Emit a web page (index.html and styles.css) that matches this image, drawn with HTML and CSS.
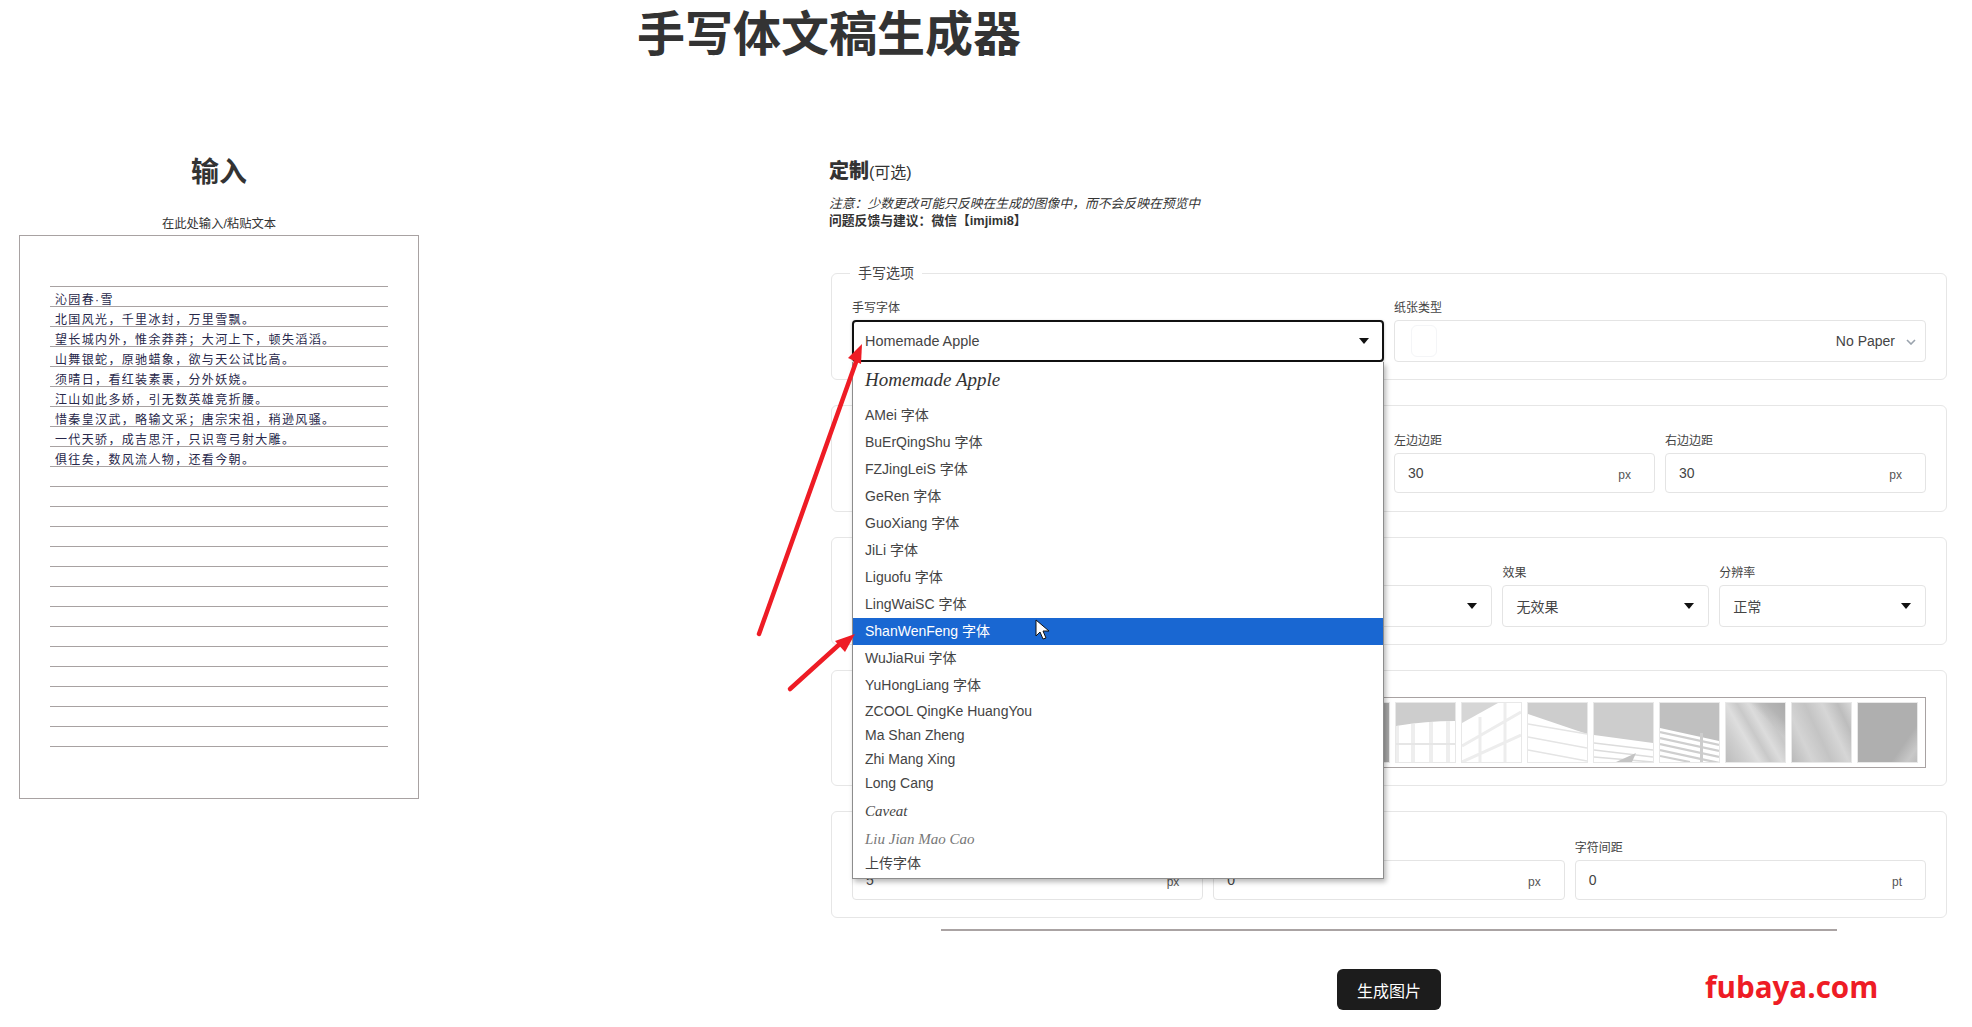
FILE: index.html
```html
<!DOCTYPE html>
<html lang="zh-CN">
<head>
<meta charset="utf-8">
<title>手写体文稿生成器</title>
<link rel="stylesheet" href="styles.css">
</head>
<body>
<h1 class="title">手写体文稿生成器</h1>
<main class="columns">
  <section class="input-col">
    <h2 class="input-title">输入</h2>
    <p class="input-hint">在此处输入/粘贴文本</p>
    <div class="paper">
      <div class="line">沁园春·雪</div>
      <div class="line">北国风光，千里冰封，万里雪飘。</div>
      <div class="line">望长城内外，惟余莽莽；大河上下，顿失滔滔。</div>
      <div class="line">山舞银蛇，原驰蜡象，欲与天公试比高。</div>
      <div class="line">须晴日，看红装素裹，分外妖娆。</div>
      <div class="line">江山如此多娇，引无数英雄竞折腰。</div>
      <div class="line">惜秦皇汉武，略输文采；唐宗宋祖，稍逊风骚。</div>
      <div class="line">一代天骄，成吉思汗，只识弯弓射大雕。</div>
      <div class="line">俱往矣，数风流人物，还看今朝。</div>
      <div class="line"></div><div class="line"></div><div class="line"></div><div class="line"></div><div class="line"></div><div class="line"></div><div class="line"></div><div class="line"></div><div class="line"></div><div class="line"></div><div class="line"></div><div class="line"></div><div class="line"></div><div class="line"></div>
    </div>
  </section>

  <section class="custom-col">
    <h3 class="custom-title"><b>定制</b><span class="optional">(可选)</span></h3>
    <p class="note"><i>注意：少数更改可能只反映在生成的图像中，而不会反映在预览中</i><br><b>问题反馈与建议：微信【imjimi8】</b></p>

    <div class="group group-first">
      <span class="legend">手写选项</span>
      <div class="grid-2">
        <div class="field">
          <label class="label">手写字体</label>
          <div class="control control-focus">
            <span class="value value-lg">Homemade Apple</span><span class="caret"></span>
            <ul class="menu">
              <li class="opt opt-hand">Homemade Apple</li>
              <li class="opt">AMei 字体</li>
              <li class="opt">BuErQingShu 字体</li>
              <li class="opt">FZJingLeiS 字体</li>
              <li class="opt">GeRen 字体</li>
              <li class="opt">GuoXiang 字体</li>
              <li class="opt">JiLi 字体</li>
              <li class="opt">Liguofu 字体</li>
              <li class="opt">LingWaiSC 字体</li>
              <li class="opt opt-active">ShanWenFeng 字体</li>
              <li class="opt">WuJiaRui 字体</li>
              <li class="opt">YuHongLiang 字体</li>
              <li class="opt opt-sm">ZCOOL QingKe HuangYou</li>
              <li class="opt opt-sm">Ma Shan Zheng</li>
              <li class="opt opt-sm">Zhi Mang Xing</li>
              <li class="opt opt-sm">Long Cang</li>
              <li class="opt opt-caveat">Caveat</li>
              <li class="opt opt-sm opt-liu">Liu Jian Mao Cao</li>
              <li class="opt opt-sm">上传字体</li>
            </ul>
          </div>
        </div>
        <div class="field">
          <label class="label">纸张类型</label>
          <div class="control control-paper">
            <span class="swatch"></span>
            <span class="paper-value">No Paper</span>
            <svg class="chevron" viewBox="0 0 10 6" width="10" height="6"><path d="M1 1l4 4 4-4" fill="none" stroke="#9aa3ad" stroke-width="1.6"/></svg>
          </div>
        </div>
      </div>
    </div>

    <div class="group group-margins">
      <div class="grid-4">
        <div class="field"></div>
        <div class="field"></div>
        <div class="field">
          <label class="label">左边边距</label>
          <div class="control control-num"><span class="value">30</span><span class="unit">px</span></div>
        </div>
        <div class="field">
          <label class="label">右边边距</label>
          <div class="control control-num"><span class="value">30</span><span class="unit">px</span></div>
        </div>
      </div>
    </div>

    <div class="group">
      <div class="grid-5">
        <div class="field"></div>
        <div class="field"></div>
        <div class="field">
          <span class="label"></span>
          <div class="control"><span class="caret"></span></div>
        </div>
        <div class="field">
          <label class="label">效果</label>
          <div class="control"><span class="value">无效果</span><span class="caret"></span></div>
        </div>
        <div class="field">
          <label class="label">分辨率</label>
          <div class="control"><span class="value">正常</span><span class="caret"></span></div>
        </div>
      </div>
    </div>

    <div class="group">
      <div class="thumbs">
        <span class="thumb thumb-dark"></span>
        <span class="thumb">
          <svg viewBox="0 0 59 59"><path d="M0 0h59v18Q30 18 0 23z" fill="#cdcdcd"/><path d="M1 23v36M17 21v38M35 19v40M52 18v41" stroke="#eee" stroke-width="4" fill="none"/><path d="M0 41h59" stroke="#e6e6e6" stroke-width="2" fill="none"/></svg>
        </span>
        <span class="thumb">
          <svg viewBox="0 0 59 59"><path d="M0 0h36L0 20z" fill="#d6d6d6"/><path d="M0 43L59 9M0 59L59 32M18 14v45M43 0v59" stroke="#ededed" stroke-width="3" fill="none"/></svg>
        </span>
        <span class="thumb">
          <svg viewBox="0 0 59 59"><path d="M0 0h59v31L0 11z" fill="#cdcdcd"/><path d="M0 21L59 31M0 34L59 45M0 47L59 58" stroke="#e4e4e4" stroke-width="1.6" fill="none"/></svg>
        </span>
        <span class="thumb">
          <svg viewBox="0 0 59 59"><path d="M0 0h59v40L0 32z" fill="#cdcdcd"/><path d="M0 40L59 47M0 47L59 54M0 54L59 59" stroke="#dcdcdc" stroke-width="1.6" fill="none"/><path d="M22 59L42 50 38 59z" fill="#c4c4c4"/></svg>
        </span>
        <span class="thumb">
          <svg viewBox="0 0 59 59"><path d="M0 0h59v38L0 25z" fill="#c0c0c0"/><path d="M0 29L59 42M0 35L59 48M0 41L59 54M0 47L59 60M0 53L30 59" stroke="#cfcfcf" stroke-width="2.2" fill="none"/><path d="M40 30h3v29h-3z" fill="#cdcdcd"/></svg>
        </span>
        <span class="thumb thumb-rays-a"></span>
        <span class="thumb thumb-rays-b"></span>
        <span class="thumb thumb-corner"></span>
      </div>
    </div>

    <div class="group group-spacing">
      <div class="grid-3">
        <div class="field">
          <span class="label"></span>
          <div class="control control-num"><span class="value">5</span><span class="unit">px</span></div>
        </div>
        <div class="field">
          <span class="label"></span>
          <div class="control control-num"><span class="value">0</span><span class="unit">px</span></div>
        </div>
        <div class="field">
          <label class="label">字符间距</label>
          <div class="control control-num"><span class="value">0</span><span class="unit">pt</span></div>
        </div>
      </div>
    </div>

    <hr class="rule">
    <div class="actions"><button class="generate" type="button">生成图片</button></div>
  </section>
</main>

<div class="watermark">fubaya.com</div>

<svg class="overlay" viewBox="0 0 1972 1027" width="1972" height="1027">
  <g fill="none" stroke="#ee1c25" stroke-width="4.5" stroke-linecap="round">
    <path d="M759 634L856 362"/>
    <path d="M790 689L842 642"/>
  </g>
  <path d="M862 344L848 358 861 364z" fill="#ee1c25"/>
  <path d="M855 634L835 641 845 652z" fill="#ee1c25"/>
  <path d="M1036 620v16l4-4 3 7 3-1-3-7h6z" fill="#fff" stroke="#111" stroke-width="1"/>
</svg>
</body>
</html>
```
FILE: styles.css
```css
* { box-sizing: border-box; }
html, body { margin: 0; padding: 0; background: #fff; }
body {
  position: relative;
  width: 1972px;
  height: 1027px;
  overflow: hidden;
  color: #333;
  font-family: "Liberation Sans", "Noto Sans CJK SC", sans-serif;
}
.title {
  width: 1658px;
  height: 66px;
  margin: 0;
  text-align: center;
  font-size: 48px;
  line-height: 70px;
  font-weight: 700;
  color: #333;
}
.columns {
  display: grid;
  grid-template-columns: 400px 1118px;
  column-gap: 410px;
  padding: 84px 0 0 19px;
}
.input-title {
  margin: 0;
  height: 44px;
  text-align: center;
  font-size: 28px;
  line-height: 46px;
  font-weight: 700;
}
.input-hint {
  margin: 20px 0 4px;
  height: 17px;
  text-align: center;
  font-size: 12.3px;
  line-height: 20px;
}
.paper {
  height: 564px;
  border: 1px solid #a8a2a2;
  padding: 50px 30px 0;
}
.line {
  height: 20px;
  padding-left: 5px;
  border-bottom: 1px solid #a8a2a2;
  font-size: 12px;
  line-height: 27px;
  letter-spacing: 1.35px;
  color: #27274a;
}
.line:first-child { height: 21px; border-top: 1px solid #a8a2a2; }

.custom-title {
  display: flex;
  align-items: baseline;
  margin: 0;
  height: 45px;
  font-size: 20px;
  line-height: 42px;
}
.optional { font-size: 16px; font-weight: 400; }
.note {
  margin: 0 0 43px;
  height: 35px;
  font-size: 12.8px;
  line-height: 17px;
}
.group {
  position: relative;
  margin: 0 0 25px 2px;
  padding: 26px 20px 17px;
  border: 1px solid #e6e6e6;
  border-radius: 6px;
}
.group-first { padding-top: 25px; }
.group-margins { padding-bottom: 18px; }
.group-spacing { padding-top: 27px; }
.legend {
  position: absolute;
  top: -11px;
  left: 18px;
  padding: 0 8px;
  background: #fff;
  font-size: 14px;
  line-height: 20px;
  color: #444;
}
.grid-2 { display: grid; grid-template-columns: 1fr 1fr; column-gap: 10px; }
.grid-3 { display: grid; grid-template-columns: 1fr 1fr 1fr; column-gap: 10px; }
.grid-4 { display: grid; grid-template-columns: repeat(4, 1fr); column-gap: 10px; }
.grid-5 { display: grid; grid-template-columns: repeat(5, 1fr); column-gap: 10px; }
.label {
  display: block;
  height: 16px;
  margin-bottom: 5px;
  font-size: 12px;
  line-height: 18px;
  color: #444;
}
.control {
  position: relative;
  display: flex;
  align-items: center;
  height: 42px;
  padding: 0 13px;
  border: 1px solid #e4e4e4;
  border-radius: 4px;
  font-size: 14px;
  color: #444;
}
.control-paper { padding-right: 9px; }
.control-num { height: 40px; justify-content: space-between; padding-right: 23px; }
.value-lg { font-size: 14.4px; }
.unit { position: relative; top: 2px; font-size: 12px; color: #555; }
.control-focus {
  z-index: 5;
  border: 2px solid #111;
  padding-left: 11px;
  box-shadow: 0 1px 3px rgba(0, 0, 0, .25);
}
.caret {
  position: absolute;
  right: 14px;
  top: 50%;
  margin-top: -3px;
  width: 0;
  height: 0;
  border-left: 5px solid transparent;
  border-right: 5px solid transparent;
  border-top: 6px solid #111;
}
.control-focus > .caret { right: 13px; }
.swatch {
  width: 26px;
  height: 32px;
  margin-left: 3px;
  border: 1px solid #f4f5f7;
  border-radius: 6px;
}
.paper-value { margin-left: auto; }
.chevron { margin: 2px 0 0 11px; }

.menu {
  position: absolute;
  left: -2px;
  right: -2px;
  top: 40px;
  margin: 0;
  padding: 0 0 3px;
  list-style: none;
  background: #fff;
  border: 1px solid #8d8d8d;
  border-top: 0;
  box-shadow: 2px 3px 5px rgba(0, 0, 0, .28);
  font-size: 14px;
  color: #444;
}
.opt {
  height: 27px;
  padding-left: 12px;
  line-height: 27px;
  white-space: nowrap;
}
.opt-hand {
  height: 40px;
  line-height: 36px;
  font-family: "Liberation Serif", serif;
  font-style: italic;
  font-size: 19px;
  color: #333;
}
.opt-active { background: #1967d2; color: #fff; }
.opt-sm { height: 24px; line-height: 24px; }
.opt-caveat {
  height: 32px;
  line-height: 32px;
  font-family: "Liberation Serif", serif;
  font-style: italic;
  font-size: 15px;
}
.opt-liu {
  font-family: "Liberation Serif", serif;
  font-style: italic;
  font-size: 15px;
  color: #777;
}

.thumbs {
  display: flex;
  justify-content: flex-end;
  gap: 7px;
  height: 71px;
  padding: 5px 8px 0 0;
  border: 1px solid #a8a2a2;
  overflow: hidden;
}
.thumb {
  flex: none;
  display: block;
  width: 59px;
  height: 59px;
  background: #fff;
  outline: 1px solid #e8e8e8;
  overflow: hidden;
}
.thumb svg { display: block; width: 59px; height: 59px; }
.thumb-dark { background: #a8a8a8; }
.thumb-rays-a {
  background:
    linear-gradient(225deg, #aaa 0, #b4b4b4 16%, rgba(180,180,180,0) 30%),
    linear-gradient(60deg, #bdbdbd 0, #cfcfcf 22%, #dedede 36%, #c9c9c9 48%, #dcdcdc 60%, #c8c8c8 74%, #d4d4d4 100%);
}
.thumb-rays-b {
  background: linear-gradient(65deg, #b9b9b9 0, #d4d4d4 24%, #c4c4c4 46%, #d6d6d6 66%, #bdbdbd 84%, #d8d8d8 100%);
}
.thumb-corner {
  background: linear-gradient(125deg, #afafaf 0, #afafaf 74%, #c8c8c8 90%, #bdbdbd 100%);
}

.rule {
  width: 896px;
  height: 2px;
  margin: -14px auto 0;
  border: 0;
  background: #aaa3a3;
  position: relative;
  left: 1px;
}
.actions { display: flex; justify-content: center; margin-top: 38px; padding-left: 2px; }
.generate {
  width: 104px;
  height: 41px;
  border: 0;
  border-radius: 6px;
  background: #1c1c1c;
  color: #fff;
  font-family: "Noto Sans CJK SC", sans-serif;
  font-size: 16px;
}
.watermark {
  position: absolute;
  left: 1705px;
  top: 966px;
  font-family: "Open Sans", sans-serif;
  font-weight: 700;
  font-size: 29.6px;
  line-height: 42px;
  color: #ee1c25;
}
.overlay {
  position: absolute;
  left: 0;
  top: 0;
  z-index: 10;
  pointer-events: none;
}
```
